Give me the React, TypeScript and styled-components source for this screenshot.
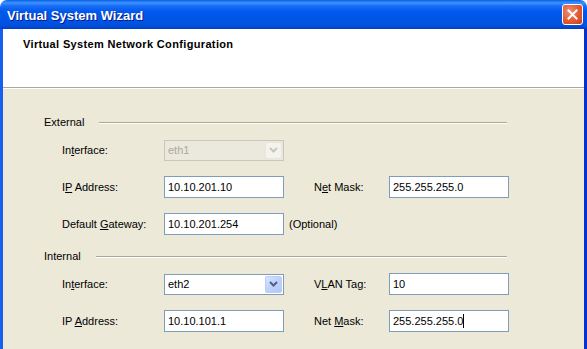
import styled, { createGlobalStyle } from 'styled-components';

const GlobalStyle = createGlobalStyle`
	html, body {
		margin: 0;
		padding: 0;
		background: #ffffff;
		overflow: hidden;
	}
	body {
		font-family: 'Liberation Sans', Arial, sans-serif;
		font-size: 11px;
		color: #000;
	}
`;

interface ComboProps {
	value: string;
	disabled?: boolean;
}

const Combo = ({ value, disabled = false }: ComboProps) => (
	<ComboBox $disabled={disabled}>
		<ComboText>{value}</ComboText>
		<ComboButton $disabled={disabled}>
			<svg width="9" height="6" viewBox="0 0 9 6">
				<path d="M1 1 L4.5 4.5 L8 1" fill="none" stroke={disabled ? '#C9C7BA' : '#4D6185'} strokeWidth="2" />
			</svg>
		</ComboButton>
	</ComboBox>
);

const App = () => {
	return (
		<>
			<GlobalStyle />
			<Window>
				<TitleBar>
					<Title>Virtual System Wizard</Title>
					<CloseButton>
						<svg width="11" height="11" viewBox="0 0 11 11">
							<path d="M1.5 1.5 L9.5 9.5 M9.5 1.5 L1.5 9.5" stroke="#fff" strokeWidth="2" strokeLinecap="square" />
						</svg>
					</CloseButton>
				</TitleBar>
				<Frame>
					<Header>
						<HeaderTitle>Virtual System Network Configuration</HeaderTitle>
					</Header>
					<Separator />
					<Body>
						<GroupHeader>
							<span>External</span>
							<Rule />
						</GroupHeader>
						<Rows>
							<Row>
								<Label>
									In<Key>t</Key>erface:
								</Label>
								<Combo value="eth1" disabled />
							</Row>
							<Row>
								<Label>
									I<Key>P</Key> Address:
								</Label>
								<TextBox>10.10.201.10</TextBox>
								<SideLabel>
									N<Key>e</Key>t Mask:
								</SideLabel>
								<TextBox>255.255.255.0</TextBox>
							</Row>
							<Row>
								<Label>
									Default <Key>G</Key>ateway:
								</Label>
								<TextBox>10.10.201.254</TextBox>
								<Hint>(Optional)</Hint>
							</Row>
						</Rows>
						<GroupHeader $spaced>
							<span>Internal</span>
							<Rule />
						</GroupHeader>
						<Rows>
							<Row>
								<Label>
									In<Key>t</Key>erface:
								</Label>
								<Combo value="eth2" />
								<SideLabel>
									V<Key>L</Key>AN Tag:
								</SideLabel>
								<TextBox>10</TextBox>
							</Row>
							<Row>
								<Label>
									IP <Key>A</Key>ddress:
								</Label>
								<TextBox>10.10.101.1</TextBox>
								<SideLabel>
									Net <Key>M</Key>ask:
								</SideLabel>
								<TextBox>
									255.255.255.0
									<Caret />
								</TextBox>
							</Row>
						</Rows>
					</Body>
				</Frame>
			</Window>
		</>
	);
};

export default App;

const Window = styled.div`
	width: 587px;
	height: 349px;
	display: flex;
	flex-direction: column;
	overflow: hidden;
`;

const TitleBar = styled.div`
	height: 29px;
	flex-shrink: 0;
	display: flex;
	align-items: center;
	justify-content: space-between;
	padding: 0 4px 0 7px;
	box-sizing: border-box;
	border-radius: 7px 7px 0 0;
	background: linear-gradient(
		to bottom,
		#0a5fe8 0%,
		#3d95ff 10%,
		#1a6ef5 20%,
		#0058ee 40%,
		#0055e5 70%,
		#0050dc 88%,
		#003fc4 100%
	);
`;

const Title = styled.span`
	font-family: 'Liberation Sans', Arial, sans-serif;
	font-weight: bold;
	font-size: 13px;
	color: #fff;
	text-shadow: 1px 1px 0 #0a1883;
	padding-top: 1px;
`;

const CloseButton = styled.div`
	width: 21px;
	height: 21px;
	box-sizing: border-box;
	border: 1px solid #fff;
	border-radius: 3px;
	display: flex;
	align-items: center;
	justify-content: center;
	background: radial-gradient(circle at 35% 35%, #f09070 0%, #e35a32 55%, #c8401a 100%);
`;

const Frame = styled.div`
	flex: 1;
	display: flex;
	flex-direction: column;
	border-left: 3px solid #1660f0;
	border-right: 3px solid #0731c8;
`;

const Header = styled.div`
	height: 58px;
	flex-shrink: 0;
	background: #fff;
	padding: 9px 0 0 20px;
	box-sizing: border-box;
`;

const HeaderTitle = styled.div`
	font-weight: bold;
	font-size: 11px;
	line-height: 13px;
	letter-spacing: 0.35px;
`;

const Separator = styled.div`
	height: 1px;
	flex-shrink: 0;
	background: #aca899;
	border-bottom: 1px solid #fff;
`;

const Body = styled.div`
	flex: 1;
	background: #ece9d8;
	padding: 26px 0 0 41px;
	display: flex;
	flex-direction: column;
`;

const GroupHeader = styled.div<{ $spaced?: boolean }>`
	width: 463px;
	height: 14px;
	display: flex;
	align-items: center;
	gap: 15px;
	margin-top: ${(p) => (p.$spaced ? '14px' : '0')};
`;

const Rule = styled.div`
	flex: 1;
	height: 1px;
	margin-top: 2px;
	background: #aca899;
	border-bottom: 1px solid #fff;
`;

const Rows = styled.div`
	display: flex;
	flex-direction: column;
	gap: 15px;
	padding-left: 18px;
	margin-top: 10px;
`;

const Row = styled.div`
	height: 22px;
	display: flex;
	align-items: center;
`;

const Label = styled.span`
	width: 102px;
	flex-shrink: 0;
`;

const SideLabel = styled.span`
	width: 75px;
	margin-left: 30px;
	flex-shrink: 0;
`;

const Hint = styled.span`
	margin-left: 5px;
`;

const Key = styled.span`
	text-decoration: underline;
`;

const TextBox = styled.div`
	width: 120px;
	height: 22px;
	box-sizing: border-box;
	border: 1px solid #7f9db9;
	background: #fff;
	padding: 0 3px;
	display: flex;
	align-items: center;
	font-size: 11px;
`;

const Caret = styled.span`
	width: 1px;
	height: 14px;
	background: #000;
`;

const ComboBox = styled.div<{ $disabled?: boolean }>`
	width: 120px;
	height: 21px;
	box-sizing: border-box;
	border: 1px solid ${(p) => (p.$disabled ? '#c9c7ba' : '#7f9db9')};
	background: ${(p) => (p.$disabled ? '#ebe9dd' : '#fff')};
	color: ${(p) => (p.$disabled ? '#aca899' : '#000')};
	display: flex;
	align-items: center;
	justify-content: space-between;
	padding: 1px;
`;

const ComboText = styled.span`
	padding-left: 2px;
`;

const ComboButton = styled.div<{ $disabled?: boolean }>`
	width: 17px;
	height: 17px;
	box-sizing: border-box;
	border-radius: 2px;
	display: flex;
	align-items: center;
	justify-content: center;
	border: 1px solid ${(p) => (p.$disabled ? '#e8e6dc' : '#bbcdf6')};
	background: ${(p) =>
		p.$disabled
			? '#f4f3ee'
			: 'linear-gradient(135deg, #dbe6fe 0%, #c1d3fb 45%, #b2c7f6 100%)'};
`;
